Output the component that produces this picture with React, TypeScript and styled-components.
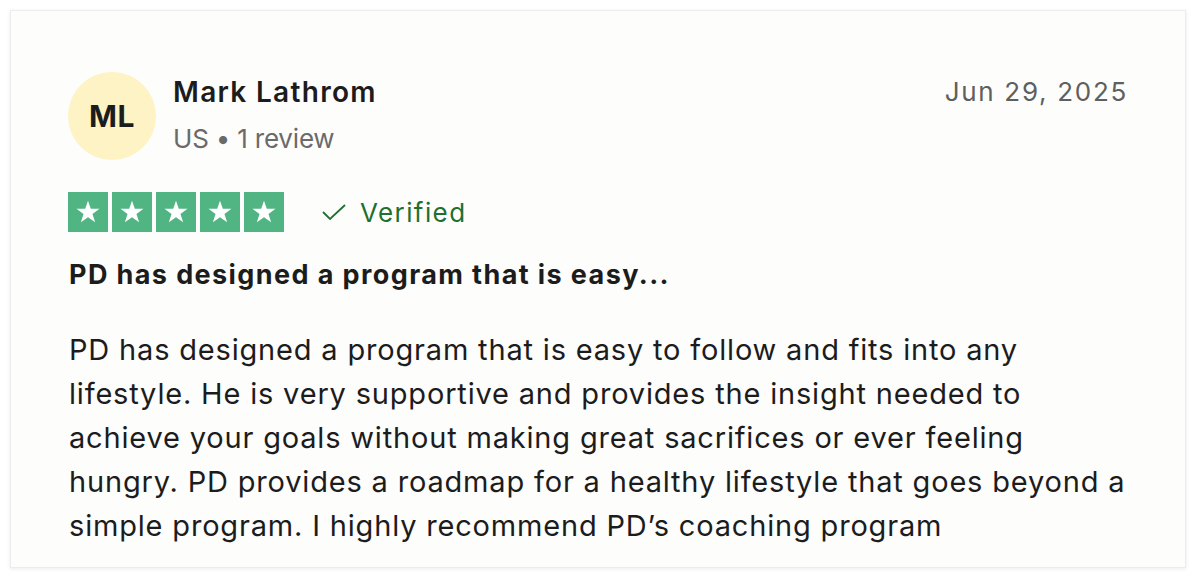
import React from "react";
import styled, { createGlobalStyle } from "styled-components";

const Global = createGlobalStyle`
  html, body { margin: 0; padding: 0; background: #ffffff; }
  body { font-family: Inter, "Noto Sans", sans-serif; }
`;

const Page = styled.div`
  padding: 10px;
  width: 1196px;
  box-sizing: border-box;
`;

const Card = styled.article`
  background: #fdfdfc;
  border: 1px solid #ececec;
  box-shadow: 0 1px 4px rgba(0, 0, 0, 0.08);
  width: 1176px;
  height: 558px;
  box-sizing: border-box;
  padding: 61px 54px 0 57px;
  display: flex;
  flex-direction: column;
`;

const Header = styled.div`
  display: flex;
  align-items: flex-start;
  justify-content: space-between;
`;

const Consumer = styled.div`
  display: flex;
  align-items: center;
  gap: 17px;
`;

const Avatar = styled.div`
  width: 88px;
  height: 88px;
  border-radius: 50%;
  background: #fdf3c4;
  display: flex;
  align-items: center;
  justify-content: center;
  font-weight: 700;
  font-size: 30px;
  color: #1c1c1c;
  letter-spacing: 0.5px;
`;

const Info = styled.div`
  display: flex;
  flex-direction: column;
  gap: 13px;
  margin-bottom: 3px;
`;

const Name = styled.div`
  font-size: 28px;
  font-weight: 600;
  color: #1c1c1c;
  line-height: 36px;
  letter-spacing: 1.3px;
`;

const Meta = styled.div`
  font-size: 26px;
  color: #6a6a6a;
  line-height: 32px;
  letter-spacing: -0.2px;
`;

const DateText = styled.time`
  font-size: 26px;
  color: #5f5f5f;
  letter-spacing: 1.7px;
  line-height: 36px;
  margin: 2px 3px 0 0;
`;

const RatingRow = styled.div`
  display: flex;
  align-items: center;
  margin-top: 32px;
  gap: 38px;
`;

const Stars = styled.div`
  display: flex;
  gap: 4px;
`;

const StarBox = styled.div`
  width: 40px;
  height: 40px;
  background: #51b583;
  display: flex;
  align-items: center;
  justify-content: center;
`;

const Verified = styled.div`
  display: flex;
  align-items: center;
  gap: 14px;
  color: #1f6f31;
  font-size: 26px;
  letter-spacing: 1.4px;
`;

const Title = styled.h2`
  margin: 26px 0 0 1px;
  font-size: 27px;
  font-weight: 700;
  color: #1c1c1c;
  line-height: 34px;
  letter-spacing: 1.4px;
`;

const Body = styled.p`
  margin: 36px 0 0 1px;
  font-size: 29px;
  color: #1c1c1c;
  line-height: 44px;
  letter-spacing: 0.82px;
`;

const Star = () => (
  <svg width="26" height="26" viewBox="0 0 24 24">
    <path
      fill="#fff"
      d="M12 1.5l2.6 7.6h8l-6.5 4.8 2.5 7.6L12 16.8 5.4 21.5l2.5-7.6L1.4 9.1h8z"
    />
  </svg>
);

const Check = () => (
  <svg width="24" height="16" viewBox="0 0 24 16">
    <path d="M1 8l7 7L23 1" fill="none" stroke="#1f6f31" strokeWidth="1.8" />
  </svg>
);

export default function App() {
  return (
    <>
      <Global />
      <Page>
        <Card>
          <Header>
            <Consumer>
              <Avatar>ML</Avatar>
              <Info>
                <Name>Mark Lathrom</Name>
                <Meta>US • 1 review</Meta>
              </Info>
            </Consumer>
            <DateText>Jun 29, 2025</DateText>
          </Header>
          <RatingRow>
            <Stars>
              {[0, 1, 2, 3, 4].map((i) => (
                <StarBox key={i}>
                  <Star />
                </StarBox>
              ))}
            </Stars>
            <Verified>
              <Check />
              Verified
            </Verified>
          </RatingRow>
          <Title>PD has designed a program that is easy...</Title>
          <Body>
            PD has designed a program that is easy to follow and fits into any
            lifestyle. He is very supportive and provides the insight needed to
            achieve your goals without making great sacrifices or ever feeling
            hungry. PD provides a roadmap for a healthy lifestyle that goes beyond a
            simple program. I highly recommend PD’s coaching program
          </Body>
        </Card>
      </Page>
    </>
  );
}
